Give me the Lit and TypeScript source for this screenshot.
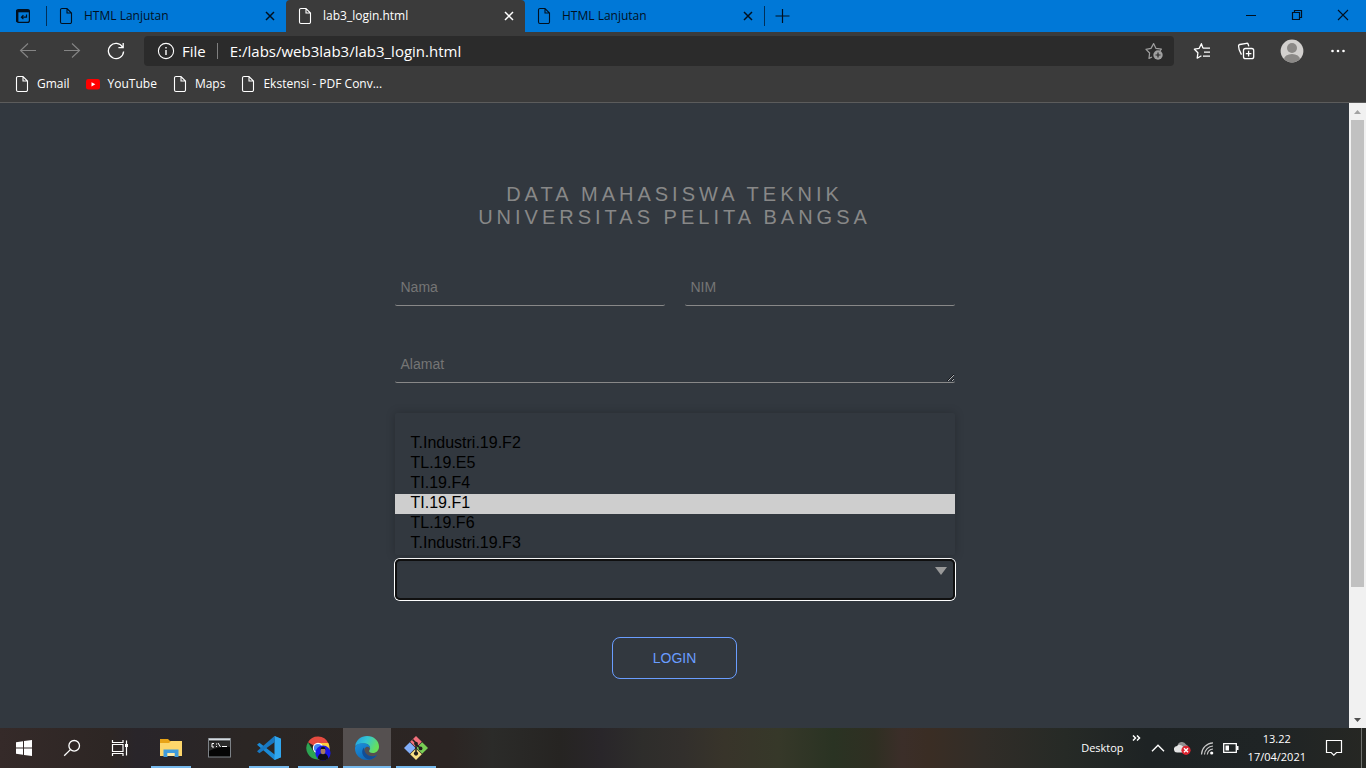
import { LitElement, html, css } from "lit";
import { customElement, property, state } from "lit/decorators.js";
import { classMap } from "lit/directives/class-map.js";

const fileIcon = () => html`<svg width="14" height="18" viewBox="0 0 14 18" fill="none" stroke="currentColor" stroke-width="1.1" aria-hidden="true">
  <path d="M1.5 3A1.5 1.5 0 0 1 3 1.5H8L12.5 6V15A1.5 1.5 0 0 1 11 16.5H3A1.5 1.5 0 0 1 1.5 15Z M8 1.5V6H12.5" />
</svg>`;

const icons = {
  actions: html`<svg width="16" height="16" viewBox="0 0 16 16" fill="none" stroke="currentColor" stroke-width="1.2">
    <rect x="1.6" y="1.6" width="12.8" height="12.8" rx="2" />
    <path d="M1.5 3H14.5" stroke-width="2.6" /><path d="M2.4 2V14" stroke-width="2" />
    <path d="M11.5 6.5V9.2H6.5M8.4 7.2L6.4 9.2L8.4 11.2" />
  </svg>`,
  back: html`<svg width="18" height="18" viewBox="0 0 18 18" fill="none" stroke="currentColor" stroke-width="1.1"><path d="M17 8.5H1.5M9 1.5L1.5 8.5L9 15.5" /></svg>`,
  forward: html`<svg width="18" height="18" viewBox="0 0 18 18" fill="none" stroke="currentColor" stroke-width="1.1"><path d="M1 8.5H16.5M9 1.5L16.5 8.5L9 15.5" /></svg>`,
  refresh: html`<svg width="18" height="18" viewBox="0 0 18 18" fill="none" stroke="currentColor" stroke-width="1.3"><path d="M15.6 5.2A7.6 7.6 0 1 0 16.6 9.5M16.2 1V5.6H11.4" /></svg>`,
  info: html`<svg width="18" height="18" viewBox="0 0 18 18" fill="none" stroke="currentColor" stroke-width="1.1"><circle cx="9" cy="9" r="7.6" /><path d="M9 8V13M9 5V6.5" stroke-width="1.4" /></svg>`,
  starAdd: html`<svg width="18" height="18" viewBox="0 0 18 18" fill="none" stroke="currentColor" stroke-width="1.2" stroke-linejoin="round">
    <path d="M7 15L4 16.4L4.6 11L1 7.3L6 6.4L8.6 1.6L11 6.4L16.4 7.2L15 8.8" /><circle cx="13" cy="13" r="4.7" fill="currentColor" stroke="none" />
    <path d="M13 10.5V15.5M10.5 13H15.5" stroke="#2b2b2b" />
  </svg>`,
  favorites: html`<svg width="18" height="18" viewBox="0 0 18 18" fill="none" stroke="currentColor" stroke-width="1.3" stroke-linejoin="round">
    <path d="M10 6.2L8.4 1.7L6.2 6.3L1.4 7.2L4.9 10.8L4.2 16.2L8.4 13.8M10 6.2H17M11 10.2H17M10 14.2H17" />
  </svg>`,
  collections: html`<svg width="18" height="18" viewBox="0 0 18 18" fill="none" stroke="currentColor" stroke-width="1.3">
    <rect x="6.5" y="6.5" width="10.2" height="10.2" rx="2" /><path d="M11.6 8.8V14.4M8.8 11.6H14.4" />
    <path d="M4.5 12.6L2.2 7.8L1.6 4.3A1.5 1.5 0 0 1 2.8 2.5L9.5 1.3A1.5 1.5 0 0 1 11.2 2.3L11.8 4.4" />
  </svg>`,
  avatar: html`<svg width="24" height="24" viewBox="0 0 24 24"><defs><clipPath id="face"><circle cx="12" cy="12" r="11.4" /></clipPath></defs>
    <circle cx="12" cy="12" r="11.4" fill="#d2d0ce" /><circle cx="12" cy="9" r="5" fill="#8b8987" />
    <ellipse cx="12" cy="20.5" rx="8" ry="5.5" fill="#8b8987" clip-path="url(#face)" />
  </svg>`,
  more: html`<svg width="16" height="4" viewBox="0 0 16 4" fill="currentColor"><circle cx="2.5" cy="2" r="1.3" /><circle cx="8" cy="2" r="1.3" /><circle cx="13.5" cy="2" r="1.3" /></svg>`,
  plus: html`<svg width="16" height="16" viewBox="0 0 16 16" stroke="currentColor" stroke-width="1.2"><path d="M7.5 1V15M.5 8H14.5" /></svg>`,
  close: html`<svg width="10" height="10" viewBox="0 0 10 10" stroke="currentColor" stroke-width="1.5"><path d="M1 1L9 9M9 1L1 9" /></svg>`,
  minimize: html`<svg width="12" height="12" viewBox="0 0 12 12" stroke="currentColor"><path d="M1 6.5H11" /></svg>`,
  restore: html`<svg width="12" height="12" viewBox="0 0 12 12" fill="none" stroke="currentColor" stroke-width="1.2"><path d="M1.5 3.5H8.5V10.5H1.5ZM3.5 3.5V1.5H10.5V8.5H8.5" /></svg>`,
  exit: html`<svg width="12" height="12" viewBox="0 0 12 12" stroke="currentColor" stroke-width="1.1"><path d="M1 1L11 11M11 1L1 11" /></svg>`,
  youtube: html`<svg width="14" height="12" viewBox="0 0 14 12"><rect y="1" width="14" height="10.6" rx="2.4" fill="#f00" /><path d="M5.5 4.2V8.4L9.3 6.3Z" fill="#fff" /></svg>`,
};

const appIcons = {
  start: html`<svg width="16" height="16" viewBox="0 0 16 16" fill="#fff"><path d="M0 2.2L7 1.2V7.5H0ZM8 1L16 0V7.5H8ZM0 8.5H7V14.8L0 13.8ZM8 8.5H16V16L8 15Z" /></svg>`,
  search: html`<svg width="18" height="18" viewBox="0 0 18 18" fill="none" stroke="#fff" stroke-width="1.3"><circle cx="11.2" cy="6.8" r="5.3" /><path d="M7.4 10.6L1.2 16.8" /></svg>`,
  taskView: html`<svg width="18" height="18" viewBox="0 0 18 18" fill="none" stroke="#fff" stroke-width="1.2"><path d="M1.5 1V3.5H12V1M1.5 17V14.5H12V17M1.5 5.5H12V12.5H1.5ZM15.5 1.5V16.5" /><rect x="14" y="5" width="3" height="3" fill="#fff" stroke="none" /></svg>`,
  explorer: html`<svg width="22" height="20" viewBox="0 0 22 20"><path d="M0 1H8L10 3H22V18H0Z" fill="#e8a317" /><path d="M0 5H9L11 3H22V18H0Z" fill="#fdd66b" /><path d="M3.5 11.5H18.5V19H14.5V15H7.5V19H3.5Z" fill="#3f9bdc" /><path d="M7.5 15H14.5V18H7.5Z" fill="#fdeaa8" /></svg>`,
  terminal: html`<svg width="24" height="20" viewBox="0 0 24 20"><rect x=".5" y=".5" width="22" height="18.5" fill="#050505" stroke="#7d8287" /><path d="M1 1.5H22" stroke="#d5dae0" stroke-width="2" /><path d="M1 3.5L22 3V9Q12 8 1 13Z" fill="#2b2b2b" /><path d="M6 5.5H4V9H6M8.5 5.5V6.5M8.5 8V9M10 5L12.5 9M14 8.5H19" fill="none" stroke="#fff" stroke-width="1" /></svg>`,
  code: html`<svg width="24" height="24" viewBox="0 0 24 24"><path d="M17.5 0L24 2.8V21.2L17.5 24L0 8.7L2.4 6.8L18 18.7V5.3Z" fill="#1b8ad6" /><path d="M17.5 0L24 2.8V21.2L17.5 24Z" fill="#30a6ee" /><path d="M17.8 6L2.4 17.2L0 15.3L17.5 0Z" fill="#1878c2" /></svg>`,
  chrome: html`<svg width="26" height="26" viewBox="-1 -1 26 26"><path d="M12 12L2 6.3A11.4 11.4 0 0 1 22.3 7H12Z" fill="#e54b40" /><path d="M12 12V7H22.4A11.4 11.4 0 0 1 12.2 23.5L17 15Z" fill="#fbcf3e" /><path d="M12 12L17 15L12 23.5A11.4 11.4 0 0 1 2 6.2L7.6 15.5Z" fill="#2ca352" /><circle cx="12" cy="12" r="5.2" fill="#fff" /><circle cx="12" cy="12" r="4.1" fill="#4586f3" />
    <circle cx="17" cy="17" r="7.6" fill="#1917e8" /><path d="M11.8 22.5Q12 18.4 15.3 17.6H18.7Q22 18.4 22.2 22.5A7.6 7.6 0 0 1 11.8 22.5Z" fill="#101019" /><ellipse cx="17" cy="15" rx="2.4" ry="3.3" fill="#a57a61" /><path d="M14.5 14.5Q14.2 10.7 17 10.7T19.5 14.5L19 13H15Z" fill="#151312" /></svg>`,
  edge: html`<svg width="24" height="24" viewBox="0 0 24 24"><defs>
      <linearGradient id="sea" x1="0" x2="1" y2=".4"><stop stop-color="#1e9be6" /><stop offset=".5" stop-color="#35c7d2" /><stop offset="1" stop-color="#67e05a" /></linearGradient>
      <linearGradient id="deep" x1="0" x2=".7" y2="1"><stop stop-color="#1b91dd" /><stop offset="1" stop-color="#0f62b1" /></linearGradient></defs>
    <path d="M.2 10C1 4 6 0 12 0C19 0 24 5 24 10.5C24 14.5 21.3 17 17.8 17C15 17 13.8 15.8 14.2 14.8C16.5 11.8 14.5 8 9.5 7.6C5.5 7.2 2 8.2.2 10Z" fill="url(#sea)" />
    <path d="M0 12C.3 8.7 4 6.8 8.8 7.3C13.5 7.7 15.6 10.2 15 13C14.5 11 12.8 10.4 11.3 11C7.5 12.8 8.5 20 15.5 20.8C18.5 21 20.5 20 22.2 18.7C20 22.2 16.4 24 12 24C5 24-.2 18.7 0 12Z" fill="url(#deep)" />
    <path d="M9 11.5C4.8 15.5 8.4 23.5 15 23.6C18 22.7 20.8 21 22.2 18.7C16.5 22.5 9 19 9 11.5Z" fill="#134d94" /></svg>`,
  git: html`<svg width="26" height="26" viewBox="0 0 26 26"><path d="M13 1L18.8 6.8L13 12.6L7.2 6.8Z" fill="#f1707a" /><path d="M19.2 7.2L25 13L19.2 18.8L13.4 13Z" fill="#79ce55" /><path d="M6.8 7.2L12.6 13L6.8 18.8L1 13Z" fill="#82aef9" /><path d="M13 13.4L18.8 19.2L13 25L7.2 19.2Z" fill="#f9e184" /><g fill="none" stroke="#211e1d" stroke-width="1.5"><path d="M9.5 4.5L13 8V19M13 9L17.5 13.5" /></g><g fill="#211e1d"><circle cx="13" cy="8.6" r="1.9" /><circle cx="17.6" cy="13.4" r="1.9" /><circle cx="13" cy="18.6" r="2.1" /></g></svg>`,
};

const trayIcons = {
  up: html`<svg width="14" height="8" viewBox="0 0 14 8" fill="none" stroke="#fff" stroke-width="1.4"><path d="M1 7.2L7 1.2L13 7.2" /></svg>`,
  cloud: html`<svg width="17" height="14" viewBox="0 0 17 14"><path d="M3.5 5A4.5 4.5 0 0 1 12 3.5A3.4 3.4 0 0 1 12 10H4Z" fill="#929292" /><path d="M3.4 11.5A3.2 3.2 0 0 1 3 5A4 4 0 0 1 9 5.5L12 11.5Z" fill="#e4e4e4" /><circle cx="12" cy="9.3" r="4.6" fill="#dc2430" /><path d="M10 7.3L14 11.3M14 7.3L10 11.3" stroke="#fff" stroke-width="1.4" /></svg>`,
  wifi: html`<svg width="14" height="14" viewBox="0 0 14 14" fill="none" stroke="#c9c9c9" stroke-width="1.2"><path d="M1.5 13.5A12 12 0 0 1 13 1.8M4.5 13.5A9 9 0 0 1 13 5M7.3 13.5A6.4 6.4 0 0 1 13 8" /><circle cx="11.7" cy="12" r="1.6" fill="#fff" stroke="none" /></svg>`,
  battery: html`<svg width="16" height="10" viewBox="0 0 16 10"><path d="M.7 .7H13.3V9.3H.7Z" fill="none" stroke="#fff" stroke-width="1.3" /><path d="M14 3H15.5V7H14Z M2.5 2.5H6V7.5H2.5Z" fill="#fff" /></svg>`,
  notes: html`<svg width="18" height="18" viewBox="0 0 18 18" fill="none" stroke="#fff" stroke-width="1.2"><path d="M1.5 1.5H16.5V13.5H11.5L8.8 16.2L6.2 13.5H1.5Z" /></svg>`,
};

const controls = css`
  *,
  *::before,
  *::after {
    box-sizing: border-box;
  }
  button {
    display: flex;
    align-items: center;
    justify-content: center;
    margin: 0;
    padding: 0;
    border: 0;
    background: none;
    color: inherit;
    font: inherit;
  }
  svg {
    display: block;
    flex: none;
  }
`;

@customElement("browser-chrome")
export class BrowserChrome extends LitElement {
  @property() address = "";
  @state() private active = 1;

  private tabs = ["HTML Lanjutan", "lab3_login.html", "HTML Lanjutan"];
  private bookmarks = [
    { name: "Gmail", icon: fileIcon() },
    { name: "YouTube", icon: icons.youtube },
    { name: "Maps", icon: fileIcon() },
    { name: "Ekstensi - PDF Conv...", icon: fileIcon() },
  ];

  static styles = [
    controls,
    css`
      :host {
        display: block;
        background: #3b3b3b;
        border-bottom: 1px solid #5c5c5c;
        color: #fff;
        font: 12px/16px "Open Sans", "Noto Sans", sans-serif;
      }
      .strip {
        display: flex;
        height: 32px;
        background: #0078d7;
        color: #00101f;
      }
      .actions {
        width: 46px;
      }
      .tabs {
        display: flex;
        flex: 0 1 717px;
        min-width: 0;
      }
      .tab {
        display: flex;
        flex: 1 1 0;
        align-items: center;
        min-width: 0;
        padding: 0 11px 0 12px;
      }
      .tab.active {
        background: #3b3b3b;
        color: #fff;
        border-radius: 4px 4px 0 0;
      }
      .pick {
        flex: 1;
        justify-content: flex-start;
        gap: 11px;
        min-width: 0;
        height: 32px;
      }
      .rule {
        width: 1px;
        height: 20px;
        margin-top: 6px;
        background: #00305a;
      }
      .new {
        width: 36px;
      }
      .window {
        display: flex;
        margin-left: auto;
        padding-bottom: 3px;
      }
      .window button {
        width: 46px;
      }
      .toolbar {
        display: flex;
        align-items: center;
        height: 38px;
        padding: 0 6px;
      }
      .toolbar > button {
        width: 44px;
        height: 38px;
      }
      .toolbar > .dim {
        color: #858585;
      }
      .toolbar > .profile {
        width: 48px;
      }
      .address {
        display: flex;
        flex: 1;
        align-items: center;
        height: 30px;
        margin: 0 6px;
        padding: 0 11px 0 13px;
        border-radius: 4px;
        background: #2b2b2b;
        font-size: 15px;
        line-height: 24px;
      }
      .address label {
        margin: 0 11px 0 7px;
      }
      .address i {
        width: 1px;
        height: 16px;
        background: #808080;
      }
      .address input {
        flex: 1;
        min-width: 0;
        height: 24px;
        margin: 0;
        padding: 0 12px;
        border: 0;
        outline: 0;
        background: none;
        color: #fff;
        font: inherit;
      }
      .address button {
        color: #a0a0a0;
      }
      .bookmarks {
        display: flex;
        align-items: center;
        gap: 16px;
        height: 32px;
        padding: 0 15px 4px;
      }
      .bookmarks a {
        display: flex;
        align-items: center;
        gap: 8px;
        color: inherit;
        text-decoration: none;
      }
    `,
  ];

  render() {
    return html`
      <div class="strip">
        <button class="actions" aria-label="Tab actions">${icons.actions}</button>
        <span class="rule"></span>
        <div class="tabs">
          ${this.tabs.map(
            (name, i) => html`<div class=${classMap({ tab: true, active: i === this.active })}>
              <button class="pick" @click=${() => (this.active = i)}>${fileIcon()}<span>${name}</span></button>
              <button aria-label="Close tab">${icons.close}</button>
            </div>`
          )}
        </div>
        <span class="rule"></span>
        <button class="new" aria-label="New tab">${icons.plus}</button>
        <div class="window">
          <button aria-label="Minimize">${icons.minimize}</button>
          <button aria-label="Restore">${icons.restore}</button>
          <button aria-label="Close">${icons.exit}</button>
        </div>
      </div>
      <div class="toolbar">
        <button class="dim" aria-label="Back">${icons.back}</button>
        <button class="dim" aria-label="Forward">${icons.forward}</button>
        <button aria-label="Refresh">${icons.refresh}</button>
        <div class="address">
          ${icons.info}<label for="url">File</label><i></i>
          <input id="url" type="text" .value=${this.address} />
          <button aria-label="Add to favorites">${icons.starAdd}</button>
        </div>
        <button aria-label="Favorites">${icons.favorites}</button>
        <button aria-label="Collections">${icons.collections}</button>
        <button class="profile" aria-label="Profile">${icons.avatar}</button>
        <button aria-label="Settings">${icons.more}</button>
      </div>
      <nav class="bookmarks">
        ${this.bookmarks.map((b) => html`<a href="#">${b.icon}<span>${b.name}</span></a>`)}
      </nav>
    `;
  }
}

@customElement("login-page")
export class LoginPage extends LitElement {
  @state() private hovered = 4;

  private classes = ["", "T.Industri.19.F2", "TL.19.E5", "TI.19.F4", "TI.19.F1", "TL.19.F6", "T.Industri.19.F3"];

  static styles = [
    controls,
    css`
      :host {
        display: block;
        background: #32383f;
        font: 14px/16px "Liberation Sans", Arial, sans-serif;
      }
      form {
        display: flex;
        flex-direction: column;
        width: 100%;
        max-width: 560px;
        margin: 0 auto;
        padding: 80px 0 48px;
      }
      h1 {
        margin: 0 0 39px;
        color: #888;
        font-size: 20px;
        font-weight: 400;
        line-height: 23px;
        letter-spacing: 4px;
        text-align: center;
        text-transform: uppercase;
      }
      .pair {
        display: grid;
        grid-template-columns: 1fr 1fr;
        gap: 20px;
      }
      input,
      textarea {
        display: block;
        width: 100%;
        height: 38px;
        margin: 0;
        padding: 10px 6px;
        border: 0;
        border-bottom: 1px solid #888;
        border-radius: 2px;
        outline: 0;
        background: none;
        color: #ccc;
        font: inherit;
      }
      textarea {
        margin-top: 39px;
        padding-top: 11px;
        overflow: hidden;
        resize: both;
      }
      ::placeholder {
        color: #757575;
        opacity: 1;
      }
      .choice {
        position: relative;
        margin-top: 176px;
      }
      select {
        display: block;
        width: 100%;
        height: 41px;
        margin: 0;
        border: 0;
        border-radius: 5px;
        outline: 0;
        appearance: none;
        background: url('data:image/svg+xml,<svg xmlns="http://www.w3.org/2000/svg" width="12" height="8"><path d="M0 0H12L6 8Z" fill="%23999"/></svg>')
          no-repeat right 8px top 8px;
        box-shadow: inset 0 0 0 2px #101010, 0 0 0 1px #fff;
        font: inherit;
      }
      .menu {
        position: absolute;
        right: 0;
        bottom: calc(100% + 4px);
        left: 0;
        margin: 0;
        padding: 1px 0;
        border-radius: 2px;
        background: #32383f;
        box-shadow: 0 0 10px rgba(0, 0, 0, 0.22);
        color: #000;
        font-size: 16px;
        line-height: 18px;
        list-style: none;
      }
      .menu li {
        height: 20px;
        padding: 0 16px 2px;
      }
      .menu li.on {
        background: #cecece;
      }
      .login {
        align-self: center;
        height: 42px;
        margin-top: 37px;
        padding: 0 40px;
        border: 1px solid #6a9dff;
        border-radius: 8px;
        color: #6a9dff;
      }
    `,
  ];

  render() {
    return html`
      <form @submit=${(e: Event) => e.preventDefault()}>
        <h1>Data Mahasiswa Teknik<br />Universitas Pelita Bangsa</h1>
        <div class="pair">
          <input type="text" placeholder="Nama" aria-label="Nama" />
          <input type="text" placeholder="NIM" aria-label="NIM" />
        </div>
        <textarea rows="1" placeholder="Alamat" aria-label="Alamat"></textarea>
        <div class="choice">
          <select aria-label="Kelas">
            ${this.classes.map((name) => html`<option>${name}</option>`)}
          </select>
          <ul class="menu" role="listbox" aria-label="Kelas">
            ${this.classes.map(
              (name, i) => html`<li
                role="option"
                aria-selected=${i === this.hovered}
                class=${classMap({ on: i === this.hovered })}
                @mouseenter=${() => (this.hovered = i)}
              >${name}</li>`
            )}
          </ul>
        </div>
        <button class="login" type="submit">LOGIN</button>
      </form>
    `;
  }
}

@customElement("page-scrollbar")
export class PageScrollbar extends LitElement {
  static styles = [
    controls,
    css`
      :host {
        display: flex;
        flex-direction: column;
        width: 17px;
        background: #f1f1f1;
        color: #505050;
      }
      button {
        height: 17px;
      }
      .up {
        color: #a3a3a3;
      }
      .track {
        flex: 1;
        padding: 0 2px;
      }
      .thumb {
        height: 79%;
        background: #c1c1c1;
      }
    `,
  ];

  render() {
    return html`
      <button class="up" aria-label="Scroll up"><svg width="7" height="4" viewBox="0 0 7 4" fill="currentColor"><path d="M3.5 0L7 4H0Z" /></svg></button>
      <div class="track"><div class="thumb"></div></div>
      <button aria-label="Scroll down"><svg width="7" height="4" viewBox="0 0 7 4" fill="currentColor"><path d="M3.5 4L7 0H0Z" /></svg></button>
    `;
  }
}

@customElement("task-bar")
export class TaskBar extends LitElement {
  private system = [
    { name: "Start", icon: appIcons.start },
    { name: "Search", icon: appIcons.search },
    { name: "Task View", icon: appIcons.taskView },
  ];
  private apps = [
    { name: "File Explorer", icon: appIcons.explorer, open: true, focus: false },
    { name: "Command Prompt", icon: appIcons.terminal, open: false, focus: false },
    { name: "Visual Studio Code", icon: appIcons.code, open: true, focus: false },
    { name: "Google Chrome", icon: appIcons.chrome, open: true, focus: false },
    { name: "Microsoft Edge", icon: appIcons.edge, open: true, focus: true },
    { name: "Git Bash", icon: appIcons.git, open: true, focus: false },
  ];

  static styles = [
    controls,
    css`
      :host {
        display: flex;
        height: 40px;
        background: linear-gradient(
          90deg,
          #352a29 0%,
          #2d2624 8%,
          #29252a 10%,
          #2b2624 18%,
          #2c2523 33%,
          #2b2b29 36%,
          #262422 41%,
          #29262a 44%,
          #2e2d2b 47%,
          #322f2c 50%,
          #38342a 53%,
          #363829 57%,
          #2a3323 61%,
          #2f2f22 64%,
          #3b2e29 66%,
          #3a2d24 68%,
          #312d28 72%,
          #262a26 78%,
          #1e2324 84%,
          #1f2425 93%,
          #262723 100%
        );
        color: #fff;
        font: 11px/18px "Open Sans", "Noto Sans", sans-serif;
      }
      .group {
        display: flex;
      }
      .group button {
        width: 48px;
      }
      .apps {
        gap: 1px;
        margin-left: 3px;
      }
      .apps button {
        position: relative;
        border: solid transparent;
        border-width: 0 4px;
      }
      .apps .open::after {
        content: "";
        position: absolute;
        right: 0;
        bottom: 0;
        left: 0;
        height: 2px;
        background: #76b9ed;
      }
      .apps .focus {
        border: 0;
        background: #555050;
      }
      .tray {
        display: flex;
        align-items: center;
        margin-left: auto;
      }
      .more {
        align-self: flex-start;
        margin: 7px 10px 0 8px;
      }
      .status {
        display: flex;
        align-items: center;
        gap: 9px;
      }
      .clock {
        flex-direction: column;
        margin-left: 9px;
      }
      .notes {
        width: 55px;
        height: 40px;
      }
      .peek {
        width: 5px;
        height: 40px;
        border-left: 1px solid #70726f;
      }
    `,
  ];

  render() {
    return html`
      <div class="group">
        ${this.system.map((s) => html`<button aria-label=${s.name}>${s.icon}</button>`)}
      </div>
      <div class="group apps">
        ${this.apps.map(
          (a) => html`<button aria-label=${a.name} class=${classMap({ open: a.open, focus: a.focus })}>${a.icon}</button>`
        )}
      </div>
      <div class="tray">
        <span>Desktop</span>
        <button class="more" aria-label="Show desktop items">
          <svg width="9" height="6" viewBox="0 0 9 6" fill="none" stroke="#fff" stroke-width="1.5"><path d="M1 .5L3.5 3L1 5.5M5 .5L7.5 3L5 5.5" /></svg>
        </button>
        <div class="status">
          <button aria-label="Hidden icons">${trayIcons.up}</button>
          <button aria-label="OneDrive">${trayIcons.cloud}</button>
          <button aria-label="Network">${trayIcons.wifi}</button>
          <button aria-label="Battery">${trayIcons.battery}</button>
        </div>
        <button class="clock"><span>13.22</span><span>17/04/2021</span></button>
        <button class="notes" aria-label="Notifications">${trayIcons.notes}</button>
        <button class="peek" aria-label="Show desktop"></button>
      </div>
    `;
  }
}

@customElement("app-root")
export class AppRoot extends LitElement {
  static styles = css`
    :host {
      display: flex;
      flex-direction: column;
      min-height: 100vh;
    }
    .view {
      display: flex;
      flex: 1;
    }
    login-page {
      flex: 1;
      min-width: 0;
    }
  `;

  render() {
    return html`
      <browser-chrome address="E:/labs/web3lab3/lab3_login.html"></browser-chrome>
      <main class="view">
        <login-page></login-page>
        <page-scrollbar></page-scrollbar>
      </main>
      <task-bar></task-bar>
    `;
  }
}
